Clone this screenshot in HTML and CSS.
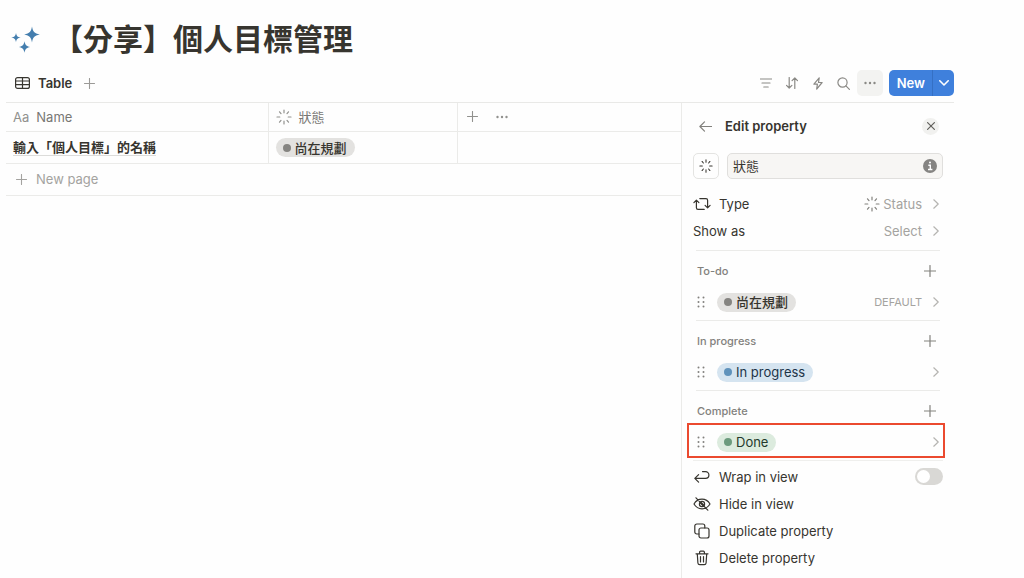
FILE: index.html
```html
<!DOCTYPE html>
<html lang="zh-Hant">
<head>
  <meta charset="UTF-8">
  <meta name="viewport" content="width=device-width, initial-scale=1.0">
  <title>【分享】個人目標管理</title>
  <link rel="stylesheet" href="styles.css">
</head>
<body>
  <svg class="sprite" aria-hidden="true">
    <symbol id="plus" viewBox="0 0 12 12"><path d="M6 .5v11M.5 6h11"/></symbol>
    <symbol id="chevron" viewBox="0 0 6 10"><path d="M.8.8 5.200 5 .8 9.200"/></symbol>
    <symbol id="dots" viewBox="0 0 12 4"><g fill="currentColor" stroke="none"><circle cx="1.500" cy="2" r="1.200"/><circle cx="6" cy="2" r="1.200"/><circle cx="10.500" cy="2" r="1.200"/></g></symbol>
    <symbol id="status" viewBox="0 0 16 16"><path d="M8 1v2.800M8 12.200V15M1 8h2.800M12.200 8H15M3.500 2.800l1.500 1.800M11 11.400l1.500 1.800M12.500 2.800 11 4.600M5 11.400l-1.500 1.800"/></symbol>
    <symbol id="grip" viewBox="0 0 8 12"><g fill="currentColor" stroke="none"><circle cx="1.500" cy="1.500" r="1"/><circle cx="6.500" cy="1.500" r="1"/><circle cx="1.500" cy="6" r="1"/><circle cx="6.500" cy="6" r="1"/><circle cx="1.500" cy="10.500" r="1"/><circle cx="6.500" cy="10.500" r="1"/></g></symbol>
  </svg>

  <div class="page">
    <header class="page-header">
      <svg class="sparkles" viewBox="0 0 30 28">
        <path d="M21 .5c.9 5 2.200 6.800 7.800 8C23.200 9.700 21.900 11.500 21 16.500c-.9-5-2.200-6.800-7.800-8C18.800 7.300 20.100 5.500 21 .5z"/>
        <path d="M5 7c.6 3 1.400 4 4.700 4.600C6.400 12.200 5.600 13.200 5 16.200c-.6-3-1.400-4-4.700-4.600C3.600 11 4.400 10 5 7z"/>
        <path d="M13.500 15.300c.7 3.600 1.800 4.900 5.700 5.700-3.900.8-5 2.100-5.700 5.700-.7-3.600-1.800-4.900-5.700-5.700 3.900-.8 5-2.100 5.700-5.700z"/>
      </svg>
      <h1>【分享】個人目標管理</h1>
    </header>

    <div class="toolbar">
      <button class="tab">
        <svg class="icon" width="15" height="12" viewBox="0 0 15 12"><rect x=".6" y=".6" width="13.800" height="10.800" rx="2"/><path d="M.6 4h13.800M.6 7.700h13.800M7.500.6v10.800"/></svg>
        Table
      </button>
      <button class="add-view" aria-label="Add view"><svg class="icon" width="11" height="11"><use href="#plus"/></svg></button>
      <div class="tools">
        <button aria-label="Filter"><svg class="icon" width="12" height="10" viewBox="0 0 12 10"><path d="M.3 1h11.400M2 5h8M3.800 9h4.400"/></svg></button>
        <button aria-label="Sort"><svg class="icon" width="12" height="12" viewBox="0 0 12 12"><path d="M3.200.5v10.500M.5 8.300l2.700 2.700 2.700-2.700M8.800 11.500V1M6.100 3.700 8.800 1l2.700 2.700"/></svg></button>
        <button aria-label="Automations"><svg class="icon" width="10" height="13" viewBox="0 0 10 13"><path d="M6.200.8.9 7.200h3.500l-.7 5 5.400-6.700H5.500z"/></svg></button>
        <button aria-label="Search"><svg class="icon" width="13" height="13" viewBox="0 0 13 13"><circle cx="5.500" cy="5.500" r="4.600"/><path d="m8.900 8.900 3.500 3.500"/></svg></button>
        <button class="active" aria-label="More"><svg class="icon" width="12" height="4"><use href="#dots"/></svg></button>
      </div>
      <div class="new">
        <button>New</button>
        <button class="new-menu" aria-label="New options"><svg class="icon" width="10" height="6" viewBox="0 0 10 6"><path d="m.8.8 4.200 4.200L9.200.8"/></svg></button>
      </div>
    </div>

    <main class="content">
      <div class="table-area">
        <table>
          <thead>
            <tr>
              <th class="col-name"><span class="cell"><span class="aa">Aa</span>Name</span></th>
              <th class="col-status"><span class="cell"><svg class="icon" width="16" height="16"><use href="#status"/></svg>狀態</span></th>
              <th>
                <span class="cell actions">
                  <button aria-label="Add property"><svg class="icon" width="11" height="11"><use href="#plus"/></svg></button>
                  <button aria-label="More properties"><svg class="icon" width="12" height="4"><use href="#dots"/></svg></button>
                </span>
              </th>
            </tr>
          </thead>
          <tbody>
            <tr>
              <td><a class="page-link" href="#">輸入「個人目標」的名稱</a></td>
              <td><span class="tag gray">尚在規劃</span></td>
              <td></td>
            </tr>
            <tr>
              <td colspan="3"><button class="new-page"><svg class="icon" width="11" height="11"><use href="#plus"/></svg>New page</button></td>
            </tr>
          </tbody>
        </table>
      </div>

      <aside class="panel">
        <div class="panel-header">
          <button class="back" aria-label="Back"><svg class="icon" width="13" height="11" viewBox="0 0 13 11"><path d="M12.500 5.500H1M5.500.9.9 5.500l4.600 4.600"/></svg></button>
          <h2>Edit property</h2>
          <button class="close" aria-label="Close"><svg class="icon" width="8" height="8" viewBox="0 0 8 8"><path d="m.6.6 6.800 6.800M7.400.6.6 7.400"/></svg></button>
        </div>

        <div class="name-row">
          <button class="icon-picker" aria-label="Property icon"><svg class="icon" width="14" height="14"><use href="#status"/></svg></button>
          <div class="name-field">
            <input type="text" value="狀態" aria-label="Property name">
            <button aria-label="Info"><svg width="14" height="14" viewBox="0 0 14 14"><circle cx="7" cy="7" r="7" fill="#858482"/><path d="M5.300 6.200h2v4.300M5 10.500h4.400" fill="none" stroke="#fff" stroke-width="1.400"/><circle cx="7" cy="3.600" r="1" fill="#fff"/></svg></button>
          </div>
        </div>

        <button class="row">
          <svg class="icon row-icon" width="18" height="14" viewBox="0 0 18 14"><path d="M.9 5.700 3.400 3.200l2.500 2.500M3.400 3.400v7.400c0 1 .6 1.600 1.600 1.600h6.200M6.800 1.600H13c1 0 1.600.6 1.600 1.600v7.400M12.100 8.300l2.500 2.500 2.500-2.500"/></svg>
          Type
          <span class="value"><svg class="icon" width="16" height="16"><use href="#status"/></svg>Status</span>
          <svg class="icon chevron" width="6" height="10"><use href="#chevron"/></svg>
        </button>
        <button class="row">
          Show as
          <span class="value">Select</span>
          <svg class="icon chevron" width="6" height="10"><use href="#chevron"/></svg>
        </button>

        <div class="groups">
          <section class="group">
            <div class="group-header">
              <h3>To-do</h3>
              <button aria-label="Add option"><svg class="icon" width="12" height="12"><use href="#plus"/></svg></button>
            </div>
            <button class="option">
              <svg class="icon grip" width="8" height="12"><use href="#grip"/></svg>
              <span class="tag gray">尚在規劃</span>
              <span class="value small">DEFAULT</span>
              <svg class="icon chevron" width="6" height="10"><use href="#chevron"/></svg>
            </button>
          </section>
          <section class="group">
            <div class="group-header">
              <h3>In progress</h3>
              <button aria-label="Add option"><svg class="icon" width="12" height="12"><use href="#plus"/></svg></button>
            </div>
            <button class="option">
              <svg class="icon grip" width="8" height="12"><use href="#grip"/></svg>
              <span class="tag blue">In progress</span>
              <span class="value"></span>
              <svg class="icon chevron" width="6" height="10"><use href="#chevron"/></svg>
            </button>
          </section>
          <section class="group">
            <div class="group-header">
              <h3>Complete</h3>
              <button aria-label="Add option"><svg class="icon" width="12" height="12"><use href="#plus"/></svg></button>
            </div>
            <button class="option highlighted">
              <svg class="icon grip" width="8" height="12"><use href="#grip"/></svg>
              <span class="tag green">Done</span>
              <span class="value"></span>
              <svg class="icon chevron" width="6" height="10"><use href="#chevron"/></svg>
            </button>
          </section>
        </div>

        <div class="menu">
          <label class="row" for="wrap">
            <svg class="icon row-icon" width="18" height="14" viewBox="0 0 18 14"><path d="M9.500 1.600h3a3.400 3.400 0 0 1 0 6.800H2M5.600 4.600 1.800 8.400l3.800 3.800"/></svg>
            Wrap in view
            <input class="switch" type="checkbox" id="wrap">
          </label>
          <button class="row">
            <svg class="icon row-icon" width="18" height="14" viewBox="0 0 18 14"><path d="M1 7c1.800-3 4.700-4.800 8-4.800S15.200 4 17 7c-1.800 3-4.700 4.800-8 4.800S2.800 10 1 7zM3 .8l11.800 12.400"/><circle cx="9" cy="7" r="2.600"/><path d="m7.800 5.800 2.500 2.500" stroke-width="2"/></svg>
            Hide in view
          </button>
          <button class="row">
            <svg class="icon row-icon" width="18" height="16" viewBox="0 0 18 16"><rect x="6" y="5" width="10" height="10" rx="2"/><path d="M6 11H3.800a2 2 0 0 1-2-2V3a2 2 0 0 1 2-2h6a2 2 0 0 1 2 2v2"/></svg>
            Duplicate property
          </button>
          <button class="row">
            <svg class="icon row-icon" width="18" height="16" viewBox="0 0 18 16"><path d="M3 3.800h12M6.600 3.600V2.200c0-.6.400-1 1-1h2.800c.6 0 1 .4 1 1v1.400M4.300 4l.6 9c.1 1 .8 1.700 1.800 1.700h4.600c1 0 1.700-.7 1.800-1.700l.6-9M7.500 6.500v5.500M10.500 6.500v5.500"/></svg>
            Delete property
          </button>
        </div>
      </aside>
    </main>
  </div>
</body>
</html>
```

FILE: styles.css
```css
* {
  box-sizing: border-box;
}

body {
  margin: 0;
  background-color: #fefefe;
  color: #37352f;
  font-family: Inter, "Noto Sans CJK TC", sans-serif;
  font-size: 13px;
  line-height: 20px;
}

button,
input {
  margin: 0;
  padding: 0;
  border: none;
  background: none;
  color: inherit;
  font: inherit;
}

button {
  display: flex;
  flex-shrink: 0;
  align-items: center;
  cursor: pointer;
}

h1,
h2,
h3 {
  margin: 0;
}

.sprite {
  display: none;
}

.icon {
  flex-shrink: 0;
  fill: none;
  stroke: currentColor;
  stroke-width: 1.2;
  stroke-linecap: round;
  stroke-linejoin: round;
}

.page {
  padding: 20px 70px 0 6px;
}

.page-header {
  display: flex;
  align-items: center;
  gap: 12px;
  padding-left: 5px;
  margin-bottom: 10px;
}

.sparkles {
  width: 30px;
  height: 28px;
  fill: #447eae;
}

h1 {
  font-size: 30px;
  line-height: 38px;
  font-weight: 700;
  padding-bottom: 2px;
}

/* toolbar */
.toolbar {
  display: flex;
  align-items: center;
  height: 32px;
  padding-bottom: 6px;
}

.tab {
  gap: 8px;
  padding-left: 9px;
  font-weight: 600;
}

.add-view {
  margin-left: 12px;
  color: #9b9a97;
}

.tools {
  display: flex;
  margin-left: auto;
  margin-right: 6px;
  color: #8a8985;
}

.tools button {
  justify-content: center;
  width: 26px;
  height: 26px;
  border-radius: 5px;
}

.tools .active {
  background-color: #f3f3f1;
}

.new {
  display: flex;
  height: 26px;
  border-radius: 5px;
  background-color: #3f80dc;
  color: #fff;
  font-weight: 600;
}

.new button {
  padding: 0 7px 0 8px;
}

.new .new-menu {
  justify-content: center;
  width: 22px;
  padding: 0;
  border-left: 1px solid #3570c4;
}

.new .icon {
  stroke-width: 1.6;
}

/* table */
.content {
  display: flex;
  border-top: 1px solid #e9e9e7;
}

.table-area {
  flex: 1;
  min-width: 0;
}

table {
  width: 100%;
  table-layout: fixed;
  border-collapse: collapse;
}

th,
td {
  height: 32px;
  padding: 0 7px;
  border-bottom: 1px solid #ebebe9;
  border-right: 1px solid #ebebe9;
  text-align: left;
}

th {
  height: 28px;
  color: #787774;
  font-weight: 400;
}

th:last-child,
td:last-child {
  border-right: none;
}

.col-name {
  width: 262px;
}

.col-status {
  width: 189px;
}

.cell {
  display: flex;
  align-items: center;
  gap: 7px;
}

.cell .icon {
  color: #91918e;
}

.aa {
  color: #91918e;
}

.actions {
  gap: 18px;
  padding-left: 2px;
}

.page-link {
  color: inherit;
  font-weight: 600;
  text-decoration: none;
  border-bottom: 1px solid #dcdcda;
}

.new-page {
  gap: 9px;
  padding-left: 3px;
  color: #a4a3a0;
}

.tag {
  display: inline-flex;
  align-items: center;
  gap: 4px;
  height: 19px;
  padding: 0 8px 0 7px;
  border-radius: 10px;
  vertical-align: middle;
}

.tag::before {
  content: "";
  width: 8px;
  height: 8px;
  border-radius: 50%;
}

.gray {
  background-color: #e3e2e0;
  font-weight: 500;
}

.gray::before {
  background-color: #858481;
}

.blue {
  background-color: #d5e4f0;
  color: #1d3448;
}

.blue::before {
  background-color: #5f92bb;
}

.green {
  background-color: #dcebde;
  color: #24392c;
}

.green::before {
  background-color: #6c9b7d;
}

/* side panel */
.panel {
  flex: 0 0 273px;
  min-width: 0;
  padding: 10px 11px;
  border-left: 1px solid #ebebe9;
}

.panel-header {
  display: flex;
  align-items: center;
  height: 26px;
  padding: 0 4px 0 6px;
}

.back {
  color: #82817d;
}

h2 {
  margin-left: 13px;
  font-size: 13px;
  line-height: 20px;
  font-weight: 600;
}

.close {
  justify-content: center;
  width: 17px;
  height: 17px;
  margin-left: auto;
  border-radius: 50%;
  background-color: #f1f1ef;
  color: #62615d;
}

.name-row {
  display: flex;
  gap: 8px;
  margin: 14px 0 11px;
}

.icon-picker {
  justify-content: center;
  width: 26px;
  height: 26px;
  border: 1px solid #e4e4e2;
  border-radius: 5px;
}

.name-field {
  display: flex;
  flex: 1;
  align-items: center;
  min-width: 0;
  height: 26px;
  padding: 0 5px;
  border: 1px solid #e0dfdd;
  border-radius: 5px;
  background-color: #f7f6f4;
}

.name-field input {
  flex: 1;
  min-width: 0;
  outline: none;
}

.row {
  display: flex;
  align-items: center;
  width: 100%;
  height: 27px;
}

.row-icon {
  margin-right: 8px;
}

.value {
  display: flex;
  align-items: center;
  gap: 3px;
  margin-left: auto;
  color: #a4a3a0;
}

.value .icon {
  color: #82817d;
}

.small {
  font-size: 11px;
}

.chevron {
  margin: 0 4px 0 11px;
  color: #b5b4b1;
}

.groups {
  margin-top: 6px;
  border-bottom: 1px solid #efefed;
}

.group {
  margin: 0 3px;
  padding-top: 10px;
  border-top: 1px solid #ebebe9;
}

.group-header {
  display: flex;
  align-items: center;
  justify-content: space-between;
  height: 20px;
  padding: 0 4px 0 1px;
  margin-bottom: 3px;
  color: #82817d;
}

h3 {
  font-size: 11px;
  font-weight: 500;
}

.option {
  position: relative;
  width: 100%;
  height: 36px;
}

.option .chevron {
  margin-right: 1px;
}

.grip {
  margin: 0 12px 0 1px;
  color: #82817d;
}

/* red frame drawn over the row */
.highlighted::after {
  content: "";
  position: absolute;
  inset: -1px -5px 2px -9px;
  border: 2px solid #eb4a2f;
}

.menu {
  padding-top: 2px;
}

.switch {
  appearance: none;
  width: 28px;
  height: 17px;
  padding: 2px;
  margin-left: auto;
  border-radius: 9px;
  background-color: #d9d8d5;
}

.switch::before {
  content: "";
  display: block;
  width: 13px;
  height: 13px;
  border-radius: 50%;
  background-color: #fff;
}

.switch:checked {
  background-color: #3f80dc;
}

.switch:checked::before {
  margin-left: auto;
}
```
